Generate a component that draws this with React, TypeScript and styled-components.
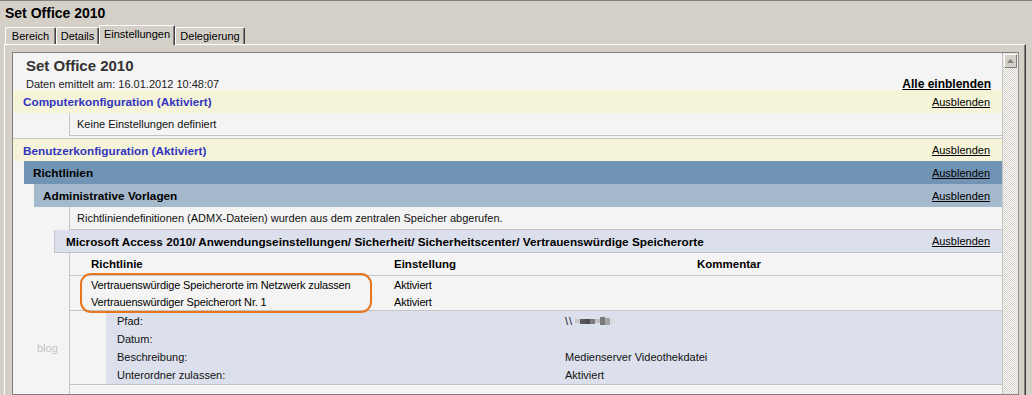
import styled, { createGlobalStyle } from "styled-components";

const GlobalStyle = createGlobalStyle`
  html, body {
    margin: 0;
    padding: 0;
  }
  body {
    background: #d4d0c8;
    font-family: "Liberation Sans", Arial, sans-serif;
    font-size: 11px;
    color: #000;
  }
`;

const Window = styled.div`
  width: 1032px;
  height: 395px;
  box-sizing: border-box;
  overflow: hidden;
  background: #d4d0c8;
  border-top: 1px solid #808080;
  display: flex;
  flex-direction: column;
`;

const WindowTitle = styled.div`
  height: 21px;
  box-sizing: border-box;
  padding: 4px 0 0 5px;
  font-size: 14px;
  font-weight: bold;
  line-height: 17px;
`;

const TabStrip = styled.div`
  height: 22px;
  display: flex;
  align-items: flex-end;
  padding-left: 5px;
`;

const Tab = styled.div<{ $active?: boolean; $width: number }>`
  position: relative;
  z-index: ${(p) => (p.$active ? 2 : 1)};
  width: ${(p) => p.$width}px;
  height: ${(p) => (p.$active ? 20 : 17)}px;
  margin-bottom: ${(p) => (p.$active ? -1 : 0)}px;
  box-sizing: border-box;
  padding-top: 2px;
  text-align: center;
  background: #d4d0c8;
  border-top: 1px solid #fff;
  border-left: 1px solid #fff;
  border-right: 1px solid #404040;
  box-shadow: inset -1px 0 0 #808080;
  border-radius: 2px 2px 0 0;
  line-height: 13px;
  white-space: nowrap;
`;

const TabPanel = styled.div`
  flex: 1;
  min-height: 0;
  margin: 0 6px 0 4px;
  padding: 7px 6px 0 7px;
  border-top: 1px solid #fff;
  border-left: 1px solid #fff;
  border-right: 1px solid #404040;
  box-shadow: inset -1px 0 0 #808080;
  display: flex;
`;

const Frame = styled.div`
  flex: 1;
  display: flex;
  border: 1px solid #808080;
  border-right-color: #909090;
  background: #f4f4f4;
  overflow: hidden;
`;

const Content = styled.div`
  flex: 1;
  min-width: 0;
  display: flex;
  flex-direction: column;
`;

const Scrollbar = styled.div`
  width: 16px;
  border-left: 1px solid #c4c4c4;
  background: repeating-conic-gradient(#ffffff 0 25%, #d4d0c8 0 50%) 0 0 / 2px 2px;
  padding: 1px;
  box-sizing: border-box;
  flex: none;
`;

const ScrollButton = styled.div`
  height: 14px;
  box-sizing: border-box;
  background: #d4d0c8;
  border-top: 1px solid #fff;
  border-left: 1px solid #fff;
  border-right: 1px solid #808080;
  border-bottom: 1px solid #808080;
  display: flex;
  align-items: center;
  justify-content: center;
`;

const Header = styled.div`
  height: 37px;
  box-sizing: border-box;
  padding: 4px 11px 0 13px;
`;

const ReportTitle = styled.div`
  font-size: 15px;
  font-weight: bold;
  color: #333;
  line-height: 18px;
`;

const MetaRow = styled.div`
  display: flex;
  justify-content: space-between;
  align-items: baseline;
  margin-top: 2px;
  color: #222;
`;

const ShowAll = styled.span`
  font-size: 12px;
  font-weight: bold;
  text-decoration: underline;
  color: #000;
`;

type Tone = "config" | "policy" | "template" | "path";

const toneBg: Record<Tone, string> = {
  config: "#f5f4d8",
  policy: "#7294b4",
  template: "#a5b9cc",
  path: "#dce0ec",
};

const SectionRow = styled.div<{ $tone: Tone; $indent?: number; $gap?: boolean }>`
  height: 23px;
  box-sizing: border-box;
  margin-left: ${(p) => p.$indent ?? 0}px;
  margin-top: ${(p) => (p.$gap ? 2 : 0)}px;
  padding: 0 12px 0 ${(p) => (p.$tone === "config" ? 10 : p.$tone === "path" ? 11 : 9)}px;
  background: ${(p) => toneBg[p.$tone]};
  border-top: ${(p) => (p.$gap ? "1px solid #c8c8c8" : "none")};
  border-left: ${(p) => (p.$tone === "path" ? "1px solid #c0c4cc" : "none")};
  border-bottom: ${(p) => (p.$tone === "path" ? "1px solid #c0c4cc" : "none")};
  display: flex;
  align-items: center;
  justify-content: space-between;
`;

const SectionLabel = styled.span<{ $tone: Tone }>`
  font-weight: bold;
  font-size: 11.75px;
  color: ${(p) => (p.$tone === "config" ? "#3434bf" : "#000")};
`;

const Hide = styled.span`
  text-decoration: underline;
  color: #000;
`;

const NoteRow = styled.div`
  height: 23px;
  box-sizing: border-box;
  margin-left: 56px;
  padding-left: 7px;
  border-left: 1px solid #c4c4c4;
  border-bottom: 1px solid #c4c4c4;
  display: flex;
  align-items: center;
  color: #111;
`;

const TableArea = styled.div`
  flex: 1;
  display: flex;
`;

const Gutter = styled.div`
  width: 56px;
  flex: none;
  box-sizing: border-box;
  padding: 89px 0 0 24px;
  color: #c4c4c4;
`;

const TableBody = styled.div`
  flex: 1;
  position: relative;
  border-left: 1px solid #c4c4c4;
`;

const Grid = styled.div<{ $head?: boolean }>`
  display: grid;
  grid-template-columns: 303px 303px 1fr;
  padding-left: 21px;
  height: ${(p) => (p.$head ? 22 : 17)}px;
  align-items: center;
  font-weight: ${(p) => (p.$head ? "bold" : "normal")};
  font-size: ${(p) => (p.$head ? "11.5px" : "11px")};
  letter-spacing: ${(p) => (p.$head ? "0" : "-0.15px")};
  border-bottom: ${(p) => (p.$head ? "1px solid #c8c8c8" : "none")};
`;

const PolicyRows = styled.div`
  border-bottom: 1px solid #c4c4c4;
`;

const DetailWrap = styled.div`
  border-bottom: 1px solid #c4c4c4;
`;

const DetailBox = styled.div`
  margin-left: 36px;
  background: #dce0ec;
  padding-top: 1px;
`;

const DetailRow = styled.div`
  height: 18px;
  display: grid;
  grid-template-columns: 448px 1fr;
  padding-left: 11px;
  align-items: center;
  color: #111;
`;

const Masked = styled.span`
  display: inline-flex;
  align-items: center;
  gap: 1px;
`;

const Slash = styled.span`
  letter-spacing: 1px;
  margin-right: 1px;
`;

const Pixel = styled.span<{ $shade: string; $h: number }>`
  display: inline-block;
  width: 5px;
  height: ${(p) => p.$h}px;
  background: ${(p) => p.$shade};
  margin-right: -1px;
`;

const Highlight = styled.div`
  position: absolute;
  left: 10px;
  top: 20px;
  width: 292px;
  height: 40px;
  box-sizing: border-box;
  border: 2.5px solid #e8761f;
  border-radius: 11px;
  pointer-events: none;
`;

const pixels: [string, number][] = [
  ["#c8c8c8", 4],
  ["#5a5a5a", 5],
  ["#4c4c4c", 5],
  ["#7c7c7c", 5],
  ["#c0c0c0", 4],
  ["#7a7a7a", 8],
  ["#a4a4a4", 7],
  ["#dadada", 5],
];

const tabs: [string, number][] = [
  ["Bereich", 51],
  ["Details", 43],
  ["Einstellungen", 76],
  ["Delegierung", 70],
];

const details: [string, string | null][] = [
  ["Pfad:", null],
  ["Datum:", ""],
  ["Beschreibung:", "Medienserver Videothekdatei"],
  ["Unterordner zulassen:", "Aktiviert"],
];

export default function App() {
  return (
    <>
      <GlobalStyle />
      <Window>
        <WindowTitle>Set Office 2010</WindowTitle>
        <TabStrip>
          {tabs.map(([name, w]) => (
            <Tab key={name} $width={w} $active={name === "Einstellungen"}>
              {name}
            </Tab>
          ))}
        </TabStrip>
        <TabPanel>
          <Frame>
            <Content>
              <Header>
                <ReportTitle>Set Office 2010</ReportTitle>
                <MetaRow>
                  <span>Daten emittelt am: 16.01.2012 10:48:07</span>
                  <ShowAll>Alle einblenden</ShowAll>
                </MetaRow>
              </Header>

              <SectionRow $tone="config">
                <SectionLabel $tone="config">Computerkonfiguration (Aktiviert)</SectionLabel>
                <Hide>Ausblenden</Hide>
              </SectionRow>
              <NoteRow>Keine Einstellungen definiert</NoteRow>

              <SectionRow $tone="config" $gap>
                <SectionLabel $tone="config">Benutzerkonfiguration (Aktiviert)</SectionLabel>
                <Hide>Ausblenden</Hide>
              </SectionRow>
              <SectionRow $tone="policy" $indent={11}>
                <SectionLabel $tone="policy">Richtlinien</SectionLabel>
                <Hide>Ausblenden</Hide>
              </SectionRow>
              <SectionRow $tone="template" $indent={21}>
                <SectionLabel $tone="template">Administrative Vorlagen</SectionLabel>
                <Hide>Ausblenden</Hide>
              </SectionRow>
              <NoteRow>
                Richtliniendefinitionen (ADMX-Dateien) wurden aus dem zentralen Speicher abgerufen.
              </NoteRow>
              <SectionRow $tone="path" $indent={41}>
                <SectionLabel $tone="path">
                  Microsoft Access 2010/ Anwendungseinstellungen/ Sicherheit/ Sicherheitscenter/
                  Vertrauenswürdige Speicherorte
                </SectionLabel>
                <Hide>Ausblenden</Hide>
              </SectionRow>

              <TableArea>
                <Gutter>blog</Gutter>
                <TableBody>
                  <Grid $head>
                    <span>Richtlinie</span>
                    <span>Einstellung</span>
                    <span>Kommentar</span>
                  </Grid>
                  <PolicyRows>
                    <Grid>
                      <span>Vertrauenswürdige Speicherorte im Netzwerk zulassen</span>
                      <span>Aktiviert</span>
                      <span />
                    </Grid>
                    <Grid>
                      <span>Vertrauenswürdiger Speicherort Nr. 1</span>
                      <span>Aktiviert</span>
                      <span />
                    </Grid>
                  </PolicyRows>
                  <DetailWrap>
                    <DetailBox>
                      {details.map(([label, value]) => (
                        <DetailRow key={label}>
                          <span>{label}</span>
                          {value === null ? (
                            <Masked>
                              <Slash>{"\\\\"}</Slash>
                              {pixels.map(([shade, h], i) => (
                                <Pixel key={i} $shade={shade} $h={h} />
                              ))}
                            </Masked>
                          ) : (
                            <span>{value}</span>
                          )}
                        </DetailRow>
                      ))}
                    </DetailBox>
                  </DetailWrap>
                  <Highlight />
                </TableBody>
              </TableArea>
            </Content>
            <Scrollbar>
              <ScrollButton>
                <svg width="7" height="4" viewBox="0 0 7 4">
                  <path d="M3.5 0 L7 4 L0 4 Z" fill="#808080" />
                </svg>
              </ScrollButton>
            </Scrollbar>
          </Frame>
        </TabPanel>
      </Window>
    </>
  );
}
